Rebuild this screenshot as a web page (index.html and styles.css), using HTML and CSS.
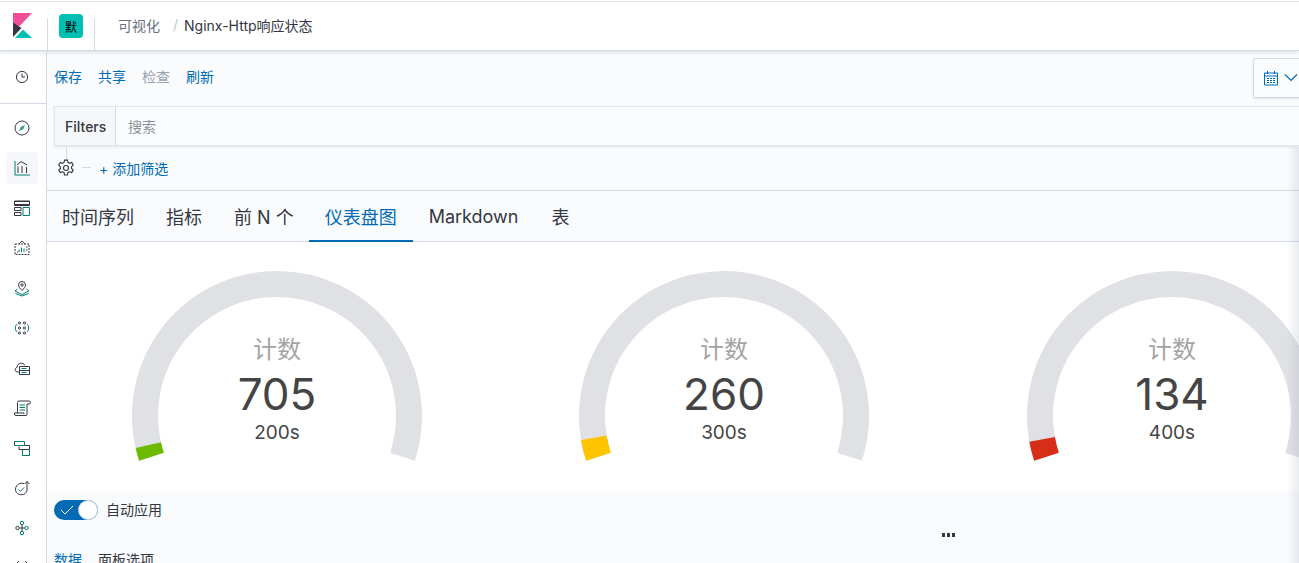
FILE: index.html
```html
<!DOCTYPE html>
<html lang="zh">
<head>
<meta charset="utf-8">
<title>Nginx-Http响应状态</title>
<link rel="stylesheet" href="styles.css">
</head>
<body>
<header class="topbar">
  <div class="logo-cell">
    <svg class="logo" width="19" height="25" viewBox="0 0 19 25"><path fill="#f04e98" d="M0 0h19L0 20z" /><path fill="#343741" d="M0 9.500L8.500 15 0 24z"/><path fill="#00bfb3" d="M2 25l8-8.500L19 25z"/></svg>
  </div>
  <div class="space-cell"><span class="space-badge">默</span></div>
  <nav class="crumbs"><span class="crumb-link">可视化</span><span class="crumb-sep">/</span><span class="crumb-current">Nginx-Http响应状态</span></nav>
</header>
<div class="shell">
  <aside class="sidenav">
    <div class="nav-recent">
      <svg class="ico" viewBox="0 0 16 16"><circle cx="8" cy="8" r="5.600" class="d"/><path d="M8 4.500V8h3" class="d"/></svg>
    </div>
    <div class="nav-list">
      <span class="nav-item"><svg class="ico" viewBox="0 0 16 16"><circle cx="8" cy="8" r="7" class="d"/><path d="M11 5 9.200 9.200 5 11l1.800-4.200z" fill="#3f9a94"/></svg></span>
      <span class="nav-item active"><svg class="ico big" viewBox="0 0 16 16"><path d="M1 1v14h15" class="t"/><path d="M4 13V6.500M8 13V6M12.500 13V7" class="d"/><path d="M3 5l4-3.500L13 5" class="d"/></svg></span>
      <span class="nav-item"><svg class="ico big" viewBox="0 0 16 16"><path d="M1 1.500h15M1 4.500h15" class="d"/><path d="M.5 1h15v4.500H.5z" class="d"/><path d="M.5 7.500h6.500v3H.5zM.5 12.500h6.500v3H.5z" class="d"/><path d="M9 7.500h6.500v8H9z" class="t"/></svg></span>
      <span class="nav-item"><svg class="ico big" viewBox="0 0 16 16"><path d="M1 4h14v10.500H1z" class="dd"/><path d="M5 4l3-3 3 3" class="d"/><path d="M5 12V9.500M7.500 12V7.500M10 12V8.500" class="t"/><path d="M3 12h1M12 7h1.500M12 10h1.500" class="d"/></svg></span>
      <span class="nav-item"><svg class="ico big" viewBox="0 0 16 16"><path d="M8 10.500C6 8.500 4.500 6.800 4.500 5a3.500 3.500 0 0 1 7 0c0 1.800-1.500 3.500-3.500 5.500z" class="d"/><circle cx="8" cy="5" r="1.200" class="d"/><path d="M3.500 9 1 11l7 3.500 7-3.500-2.500-2M1.500 13.500l6.500 2.500 6.500-2.500" class="t"/></svg></span>
      <span class="nav-item"><svg class="ico big" viewBox="0 0 16 16"><g class="d"><circle cx="5.500" cy="3" r="1.100"/><circle cx="10.500" cy="3" r="1.100"/><circle cx="5.500" cy="8" r="1.100"/><circle cx="10.500" cy="8" r="1.100"/><circle cx="5.500" cy="13" r="1.100"/><circle cx="10.500" cy="13" r="1.100"/></g><path d="M3 4C.800 6 .800 10 3 12M13 4c2.200 2 2.200 6 0 8" class="t"/></svg></span>
      <span class="nav-item"><svg class="ico big" viewBox="0 0 16 16"><path d="M5 12H3.500C.500 12 .500 8 3 7.500 3 3 9 1.500 11 5.500" class="d"/><path d="M5.500 6.500h10v8h-10zM5.500 10.500h10" class="d"/><path d="M7.500 8.500h5M7.500 12.500h5" class="t"/></svg></span>
      <span class="nav-item"><svg class="ico big" viewBox="0 0 16 16"><path d="M3.500 13V2.500A1.500 1.500 0 0 1 5 1h10a1.500 1.500 0 0 1 0 3h-2v10.500a1 1 0 0 1-1 1H2a1.500 1.500 0 0 1-1.500-1.500v-1H10v1" class="d"/><path d="M5.500 5h5.500M5.500 7.500h5.500M5.500 10h5.500" class="t"/></svg></span>
      <span class="nav-item"><svg class="ico big" viewBox="0 0 16 16"><path d="M.5 1.500h10v4H.5" class="t"/><path d="M.5 1.500v4M5 6.500v3h10.500v-4h-5" class="d"/><path d="M8.500 10v5.500h7V10" class="t"/></svg></span>
      <span class="nav-item"><svg class="ico big" viewBox="0 0 16 16"><path d="M10 3.500C3.500 1.500-.5 8.500 2.500 12.500c2.500 3 9 3.500 10.500-2V1.500M10.500 4 13 1.500 15.500 4" class="d"/><path d="M4.500 9.500l2 2L10 7.500" class="t"/></svg></span>
      <span class="nav-item"><svg class="ico big" viewBox="0 0 16 16"><circle cx="8" cy="3" r="1.700" class="t"/><circle cx="3.500" cy="8" r="1.700" class="d"/><circle cx="12.500" cy="8" r="1.700" class="t"/><circle cx="8" cy="13" r="1.700" class="t"/><path d="M5.200 8h5.600M8 4.700v6.600" class="d"/></svg></span>
      <span class="nav-item"><svg class="ico big" viewBox="0 0 16 16"><path d="M5 1 2 4l3 3M11 1l3 3-3 3" class="d"/></svg></span>
    </div>
  </aside>
  <main class="main">
    <div class="toolbar">
      <a class="tool">保存</a><a class="tool">共享</a><a class="tool off">检查</a><a class="tool">刷新</a>
      <div class="date-btn"><svg width="16" height="16" viewBox="0 0 16 16" class="cal"><path d="M1.500 3h13v12h-13zM1.500 6h13M4.500 1v3M11.500 1v3" /><path d="M4 8.500h2M7 8.500h2M10 8.500h2M4 10.500h2M7 10.500h2M10 10.500h2M4 12.500h2M7 12.500h2M10 12.500h2"/></svg><svg width="14" height="10" viewBox="0 0 14 10" class="chev"><path d="M1 1.500l6 6 6-6"/></svg></div>
    </div>
    <div class="filters"><span class="filters-label">Filters</span><span class="filters-input">搜索</span></div>
    <div class="filter-row">
      <svg class="gear" width="18" height="18" viewBox="0 0 16 16"><path d="M6.700 1h2.600l.4 2 1.500.8 1.900-.7 1.300 2.300-1.500 1.400v1.600l1.500 1.400-1.300 2.300-1.900-.7-1.500.8-.4 2H6.700l-.4-2-1.500-.8-1.900.7-1.300-2.300 1.500-1.400V7.200L1.600 5.400l1.300-2.300 1.900.7 1.500-.8z"/><circle cx="8" cy="8" r="2.200"/></svg>
      <span class="dash"></span>
      <a class="add-filter">+ 添加筛选</a>
    </div>
    <div class="tabs">
      <span class="tab">时间序列</span><span class="tab">指标</span><span class="tab">前 N 个</span><span class="tab selected">仪表盘图</span><span class="tab wide">Markdown</span><span class="tab">表</span>
    </div>
    <section class="gauges">
      <figure class="gauge">
        <svg width="292" height="200" viewBox="0 0 292 200"><path class="arc" d="M271.500 186.800A132 132 0 1 0 20.500 186.800"/><path class="val green" d="M20.500 186.800A132 132 0 0 1 17.300 175.200"/></svg>
        <figcaption class="gauge-text"><span class="g-title">计数</span><span class="g-value">705</span><span class="g-sub">200s</span></figcaption>
      </figure>
      <figure class="gauge">
        <svg width="292" height="200" viewBox="0 0 292 200"><path class="arc" d="M271.500 186.800A132 132 0 1 0 20.500 186.800"/><path class="val yellow" d="M20.500 186.800A132 132 0 0 1 15.800 167.800"/></svg>
        <figcaption class="gauge-text"><span class="g-title">计数</span><span class="g-value">260</span><span class="g-sub">300s</span></figcaption>
      </figure>
      <figure class="gauge">
        <svg width="292" height="200" viewBox="0 0 292 200"><path class="arc" d="M271.500 186.800A132 132 0 1 0 20.500 186.800"/><path class="val red" d="M20.500 186.800A132 132 0 0 1 16.100 169.400"/></svg>
        <figcaption class="gauge-text"><span class="g-title">计数</span><span class="g-value">134</span><span class="g-sub">400s</span></figcaption>
      </figure>
    </section>
    <div class="bottom">
      <div class="apply"><span class="switch"><svg width="14" height="10" viewBox="0 0 14 10"><path d="M1 5l4 4 8-8"/></svg><i class="knob"></i></span><span class="apply-label">自动应用</span></div>
      <i class="dots"></i>
      <div class="subtabs"><span class="sub on">数据</span><span class="sub">面板选项</span></div>
    </div>
    <div class="flyout-shadow"></div>
  </main>
</div>
</body>
</html>
```
FILE: styles.css
```css
* { box-sizing: border-box; }
html, body { margin: 0; height: 563px; overflow: hidden; }
body { font-family: Inter, "Noto Sans CJK SC", sans-serif; color: #343741; background: #fafbfd; }

.topbar { height: 51px; display: flex; background: #fff; border-top: 1px solid #fff; border-bottom: 1px solid #d3dae6; box-shadow: inset 0 1px 0 #e6e7ea, 0 2px 3px rgba(152,162,179,.25); position: relative; z-index: 2; }
.logo-cell { width: 47px; padding: 12px 0 0 13px; }
.logo { display: block; }
.space-cell { width: 48px; margin-top: 17px; padding-left: 11px; border-left: 1px solid #d3dae6; border-right: 1px solid #d3dae6; height: 32px; }
.space-badge { display: flex; width: 24px; height: 24px; margin-top: -4px; align-items: center; justify-content: center; border-radius: 4px; background: #00bfb3; font-size: 12px; color: #000; }
.crumbs { display: flex; align-items: center; padding: 0 0 2px 23px; font-size: 14px; }
.crumb-link { color: #69707d; }
.crumb-sep { color: #c2c6ce; margin: 0 6px 0 13px; }

.shell { display: flex; height: 512px; overflow: hidden; }
.sidenav { width: 47px; flex: none; background: #fff; border-right: 1px solid #d3dae6; overflow: hidden; }
.nav-recent { height: 53px; display: flex; align-items: center; justify-content: center; padding: 0 2px 1px 0; border-bottom: 1px solid #d3dae6; }
.nav-list { padding-top: 8px; display: flex; flex-direction: column; }
.nav-item { height: 32px; width: 32px; margin: 0 0 8px 6px; display: flex; align-items: center; justify-content: center; border-radius: 4px; flex: none; }
.nav-item.active { background: #f5f7fa; }
.ico { width: 16px; height: 16px; display: block; overflow: visible; }
.d, .dd, .t { fill: none; stroke-width: 1; }
.d { stroke: #343741; }
.dd { stroke: #343741; stroke-dasharray: 2 1; }
.t { stroke: #017d73; }
.d circle { fill: none; }

.main { flex: 1; min-width: 0; position: relative; overflow: hidden; }
.toolbar { height: 55px; display: flex; align-items: center; padding: 0 0 6px 7px; position: relative; font-size: 14px; }
.tool { color: #006bb4; margin-right: 16px; }
.tool.off { color: #98a2b3; }
.date-btn { position: absolute; left: 1206px; top: 7px; width: 60px; height: 40px; display: flex; align-items: center; gap: 5px; padding-left: 9px; background: #fbfcfd; border: 1px solid #d3dae6; box-shadow: 0 1px 2px rgba(152,162,179,.3); border-radius: 2px; }
.cal path { fill: none; stroke: #006bb4; }
.chev path { fill: none; stroke: #006bb4; stroke-width: 1.200; }
.filters { height: 40px; margin-left: 7px; display: flex; align-items: center; background: #fbfcfd; border: 1px solid #e2e5ea; border-right: 0; box-shadow: 0 1px 2px rgba(152,162,179,.3); font-size: 14px; }
.filters-label { width: 61px; height: 100%; display: flex; align-items: center; padding-left: 10px; font-weight: 500; font-size: 14px; background: #f5f7fa; border-right: 1px solid #d3dae6; }
.filters-input { padding-left: 12px; color: #8b919b; }
.filter-row { height: 44px; display: flex; align-items: center; padding: 0 0 1px 10px; position: relative; }
.filter-row::before { content: ""; position: absolute; left: 19px; top: 0; height: 13px; border-left: 1px solid #d3dae6; }
.gear path, .gear circle { fill: none; stroke: #343741; }
.dash { width: 9px; margin: 0 8px 0 7px; border-top: 1px solid #d3dae6; }
.add-filter { color: #006bb4; font-size: 14px; }
.tabs { height: 52px; display: flex; padding-left: 0; border-top: 1px solid #d3dae6; border-bottom: 1px solid #d3dae6; font-size: 18px; }
.tab { padding: 0 16px; height: 50px; display: flex; align-items: center; }
.tab:first-child { margin-left: -1px; }
.tab.selected { color: #006bb4; height: 51px; margin-left: -1px; border-bottom: 2px solid #006bb4; padding-top: 1px; }
.tab.wide { margin-right: 1px; }
.gauges { height: 249px; background: #fff; position: relative; overflow: hidden; }
.gauge { position: absolute; top: 28px; left: 84px; margin: 0; width: 292px; height: 200px; }
.gauge:nth-child(2) { left: 531px; }
.gauge:nth-child(3) { left: 979px; }
.gauge svg { display: block; }
.arc, .val { fill: none; stroke-width: 26; }
.arc { stroke: #e0e1e5; }
.green { stroke: #6eba00; }
.yellow { stroke: #fec400; }
.red { stroke: #d62e17; }
.gauge-text { position: absolute; left: 0; right: 0; top: 62px; display: flex; flex-direction: column; align-items: center; }
.g-title { font-size: 24px; line-height: 36px; color: #a4a4a4; }
.g-value { font-size: 44px; line-height: 53px; color: #444; }
.g-sub { font-size: 19px; line-height: 26px; margin-top: -1px; color: #444; }
.bottom { position: relative; height: 72px; font-size: 14px; }
.apply { display: flex; align-items: center; gap: 8px; padding: 9px 0 0 7px; }
.switch { width: 44px; height: 20px; border-radius: 10px; background: #006bb4; display: block; position: relative; }
.switch svg { position: absolute; left: 6px; top: 5px; }
.switch path { fill: none; stroke: #fff; }
.knob { position: absolute; right: 0; top: 0; width: 20px; height: 20px; border-radius: 50%; background: #fff; border: 1px solid #c8d2e0; }
.apply-label { font-size: 14px; margin-top: -3px; }
.dots { position: absolute; left: 895px; top: 42px; width: 13px; height: 4px; background: repeating-linear-gradient(90deg,#343741 0 3px,transparent 3px 5px); }
.subtabs { position: absolute; left: 7px; top: 58px; display: flex; gap: 16px; }
.sub.on { color: #006bb4; }
.flyout-shadow { position: absolute; right: 0; top: 96px; bottom: 0; width: 12px; background: linear-gradient(90deg, rgba(152,162,179,0), rgba(152,162,179,.22)); }
```
